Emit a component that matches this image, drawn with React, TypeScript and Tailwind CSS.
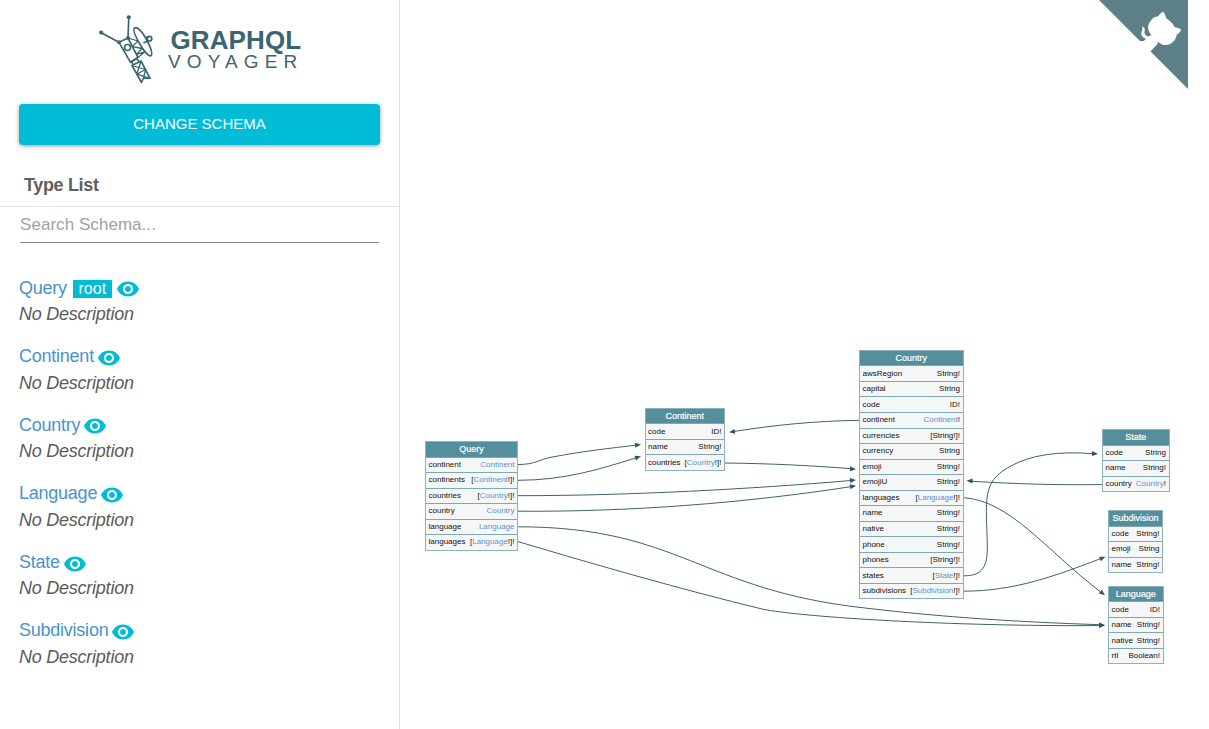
import React from "react";

type Part = { text: string; link?: boolean };
type Field = { name: string; type: string };
type TypeNode = { name: string; x: number; y: number; w: number; h: number; fields: Field[] };

const f = (s: string): Field[] =>
  s.split(",").map((p) => {
    const [name, type] = p.split(":");
    return { name, type };
  });

const nodes: TypeNode[] = [
  { name: "Query", x: 425, y: 441, w: 93, h: 109.5, fields: f("continent:Continent,continents:[Continent!]!,countries:[Country!]!,country:Country,language:Language,languages:[Language!]!") },
  { name: "Continent", x: 644.5, y: 407.9, w: 80.5, h: 63, fields: f("code:ID!,name:String!,countries:[Country!]!") },
  { name: "Country", x: 859, y: 349.9, w: 104.5, h: 249.5, fields: f("awsRegion:String!,capital:String,code:ID!,continent:Continent!,currencies:[String!]!,currency:String,emoji:String!,emojiU:String!,languages:[Language!]!,name:String!,native:String!,phone:String!,phones:[String!]!,states:[State!]!,subdivisions:[Subdivision!]!") },
  { name: "State", x: 1102, y: 429, w: 67.5, h: 63, fields: f("code:String,name:String!,country:Country!") },
  { name: "Subdivision", x: 1108, y: 510.1, w: 55, h: 63, fields: f("code:String!,emoji:String,name:String!") },
  { name: "Language", x: 1108, y: 585.9, w: 55.5, h: 78.5, fields: f("code:ID!,name:String!,native:String!,rtl:Boolean!") },
];

const parts = (type: string): Part[] =>
  type
    .split(/([A-Za-z]+)/)
    .filter(Boolean)
    .map((text) => ({ text, link: /^[A-Z]/.test(text) && !["String", "ID", "Boolean"].includes(text) }));

const edges: string[] = [
  "M518 464.5C535 464.5 538 460 550 457.5C580 451.5 612 448 635 445.3",
  "M518 480.3C565 480.3 600 469 635 458.2",
  "M518 495.7C630 495.7 750 489 850 480.6",
  "M518 511.2C630 512 745 503 850 486.8",
  "M518 526.8C680 526.8 700 590 865 608C945 617.5 1020 622 1099 624.7",
  "M518 541.6C600 566 680 589 762 609C800 617 950 626.5 1099 625.6",
  "M725 463C770 463.5 810 465.5 850 468.6",
  "M859 420.3C815 421 775 425 735 431.3",
  "M964 497.7C1010 501 1045 549 1100 591.5",
  "M964 575.8C979 575.8 987 570 987.3 550C987.5 535 986.2 525 986.4 507C987 485 993 476 1010 466.5C1030 455 1058 451 1092 453.6",
  "M964 591.2C1015 591 1055 576 1101 558.5",
  "M1102 484.6C1050 485 1020 484 972 481.3",
];

const arrows: [number, number, number][] = [
  [641, 444.6, -7], [641, 456.3, -17], [856, 480, -5], [856, 485.8, -9], [1105, 625, 1], [1105, 625.6, 0],
  [856, 469.2, 4], [729, 432.2, 172], [1105, 595.3, 38], [1098, 454.1, 5], [1105.5, 556.7, -22], [966.5, 480.8, 183],
];

function Logo() {
  return (
    <svg className="h-[76px] w-[64px] shrink-0" viewBox="94 10 64 76" fill="none" stroke="#3b656f" strokeWidth="1.65" strokeLinejoin="round">
      <path d="M101.2 32.8L119 42.2M128.8 17.5L128 38" />
      <g fill="#3b656f" stroke="none">
        <circle cx="101.2" cy="32.6" r="2.1" />
        <circle cx="128.8" cy="17.3" r="2.1" />
        <circle cx="119" cy="42.3" r="2" />
        <circle cx="128" cy="38" r="2" />
      </g>
      <path d="M119 42.3L128 38L138 57.5L130.5 62.3Z" />
      <circle cx="127.5" cy="47.5" r="3" />
      <path d="M134.5 28C137 26.5 142 31 146 38.5C150 46 153 54 151 55.7C149 57 144 51.5 139.5 43.5C135 35.5 132.5 29.5 134.5 28Z" />
      <path strokeWidth="1.3" d="M128 38L138 41L132.5 46.5L142 48.5L136.5 54.5L145 51.5L138 57.5" />
      <path d="M143.5 43L148.3 40.5M145.5 37.5L149 37" />
      <circle cx="149.5" cy="38.7" r="2.3" />
      <path d="M133 64.5L131.5 61.5L136.5 58.5L139 61.5" />
      <path d="M132 65.5L141 61L150 78.3L143.5 78L141.5 82.5Z" />
      <path strokeWidth="1.3" d="M132 65.5L145.5 69.5L136.7 74.2M141 61L136.7 74.2L150 78.3M145.5 69.5L143.5 78" />
    </svg>
  );
}

function Eye() {
  return (
    <svg viewBox="1 4 22 16" className="h-[16px] w-[22px]" fill="#00bcd4">
      <path d="M12 4.5C7 4.5 2.73 7.61 1 12c1.73 4.39 6 7.5 11 7.5s9.27-3.11 11-7.5c-1.73-4.39-6-7.5-11-7.5zM12 17c-2.76 0-5-2.24-5-5s2.24-5 5-5 5 2.24 5 5-2.24 5-5 5zm0-8c-1.66 0-3 1.34-3 3s1.34 3 3 3 3-1.34 3-3-1.34-3-3-3z" />
    </svg>
  );
}

function Sidebar() {
  return (
    <aside className="flex h-full w-[400px] shrink-0 flex-col border-r border-[#e0e0e0]">
      <header className="flex h-[104px] pl-[94px] pt-[10px] text-[#3b656f]">
        <Logo />
        <div className="pl-[10px] pt-[17px]">
          <div className="pl-[2.5px] text-[26px] leading-[26px] font-bold tracking-[0.1px]">GRAPHQL</div>
          <div className="text-[19px] leading-[18px] tracking-[6.1px]">VOYAGER</div>
        </div>
      </header>
      <button className="mx-[19px] h-[41px] w-[361px] rounded-[4px] bg-[#00bcd7] pb-px text-[15px] text-white shadow-[0_1px_4px_rgba(0,0,0,0.4)]">CHANGE SCHEMA</button>
      <h1 className="mt-[20px] h-[42px] border-b border-[#e0e0e0] pl-[24px] text-[18px] leading-[40px] font-bold tracking-[-0.35px] text-[#5f5f5f]">Type List</h1>
      <input aria-label="Search" placeholder="Search Schema..." className="ml-[20px] h-[36px] w-[359px] border-b border-[#8c8c8c] text-[17px] tracking-[0.05px] text-[#666] outline-none placeholder:text-[#a2a2a2]" />
      <ul className="mt-[32px] pl-[19px] text-[18px] tracking-[-0.24px]">
        {["Query", "Continent", "Country", "Language", "State", "Subdivision"].map((name) => (
          <li key={name} className="h-[68.6px]">
            <div className="flex h-[26px] items-center text-[#4a92d0]">
              <span>{name}</span>
              {name === "Query" && <span className="ml-[6px] mr-px mt-[2px] h-[18px] w-[39px] bg-[#00bcd4] text-center text-[16px] leading-[17px] tracking-normal text-white">root</span>}
              <span className="ml-[3.7px] mt-[2.5px]"><Eye /></span>
            </div>
            <p className="leading-[27px] text-[#5b5b5b] italic">No Description</p>
          </li>
        ))}
      </ul>
    </aside>
  );
}

function NodeCard({ node }: { node: TypeNode }) {
  return (
    <div
      className="absolute flex flex-col border border-[#8db2ba] bg-[#f5f7f7] text-[8px] leading-[10px] text-[#111]"
      style={{ left: node.x - 400, top: node.y, width: node.w, height: node.h }}
    >
      <div className="flex min-h-0 flex-1 items-center justify-center bg-[#548f9b] text-[9px] text-white [-webkit-text-stroke:0.2px_white]">{node.name}</div>
      {node.fields.map((field) => (
        <div key={field.name} className="flex min-h-0 flex-1 items-center justify-between border-t border-[#7fa9b2] px-[2.5px] whitespace-nowrap">
          <span>{field.name}</span>
          <span>{parts(field.type).map((p, i) => <span key={i} className={p.link ? "text-[#5b92d3]" : ""}>{p.text}</span>)}</span>
        </div>
      ))}
    </div>
  );
}

export default function App() {
  return (
    <div className="flex h-[729px] w-[1209px] overflow-hidden bg-white font-['Liberation_Sans',Arial,sans-serif]">
      <Sidebar />
      <main className="relative h-full min-w-0 flex-1">
        {nodes.map((node) => <NodeCard key={node.name} node={node} />)}
        <svg className="absolute inset-0 h-[729px] w-[809px]" viewBox="400 0 809 729" fill="none" stroke="#3d626b" strokeWidth="1">
          {edges.map((d) => <path key={d} d={d} />)}
          {arrows.map(([x, y, a], i) => <path key={i} transform={`translate(${x} ${y}) rotate(${a})`} d="M0 0L-6 -2.5V2.5Z" fill="#2f5660" stroke="none" />)}
        </svg>
        <svg className="absolute top-0 right-[21px] h-[89px] w-[89px]" viewBox="0 0 250 250" fill="#5d7f87">
          <path d="M0,0 L115,115 L130,115 L142,142 L250,250 L250,0 Z" />
          <path fill="#fff" transform="translate(-35 0) scale(1.3 1)" d="M128.3,109 C113.8,99.7 119,89.6 119,89.6 C122,82.7 120.5,78.6 120.5,78.6 C119.2,72 123.4,76.3 123.4,76.3 C127.3,80.9 125.5,87.3 125.5,87.3 C122.9,97.6 130.6,101.9 134.4,103.2" />
          <path fill="#fff" transform="translate(-11.8 -12) scale(1.12 1.13)" d="M115,115 C114.9,115.1 118.7,116.5 119.8,115.4 L133.7,101.6 C136.9,99.2 139.9,98.4 142.2,98.6 C133.8,88 127.5,74.4 143.8,58 C148.5,53.4 154,51.2 159.7,51 C160.3,49.4 163.2,43.6 171.4,40.1 C171.4,40.1 176.1,42.5 178.8,56.2 C183.1,58.6 187.2,61.8 190.9,65.4 C194.5,69 197.7,73.2 200.1,77.6 C213.8,80.2 216.3,84.9 216.3,84.9 C212.7,93.1 206.9,96 205.4,96.6 C205.1,102.4 203,107.8 198.3,112.5 C181.9,128.9 168.3,122.5 157.7,114.1 C157.9,116.9 156.7,120.9 152.7,124.9 L141,136.5 C139.8,137.7 141.6,141.9 141.8,141.8 Z" />
        </svg>
      </main>
    </div>
  );
}
